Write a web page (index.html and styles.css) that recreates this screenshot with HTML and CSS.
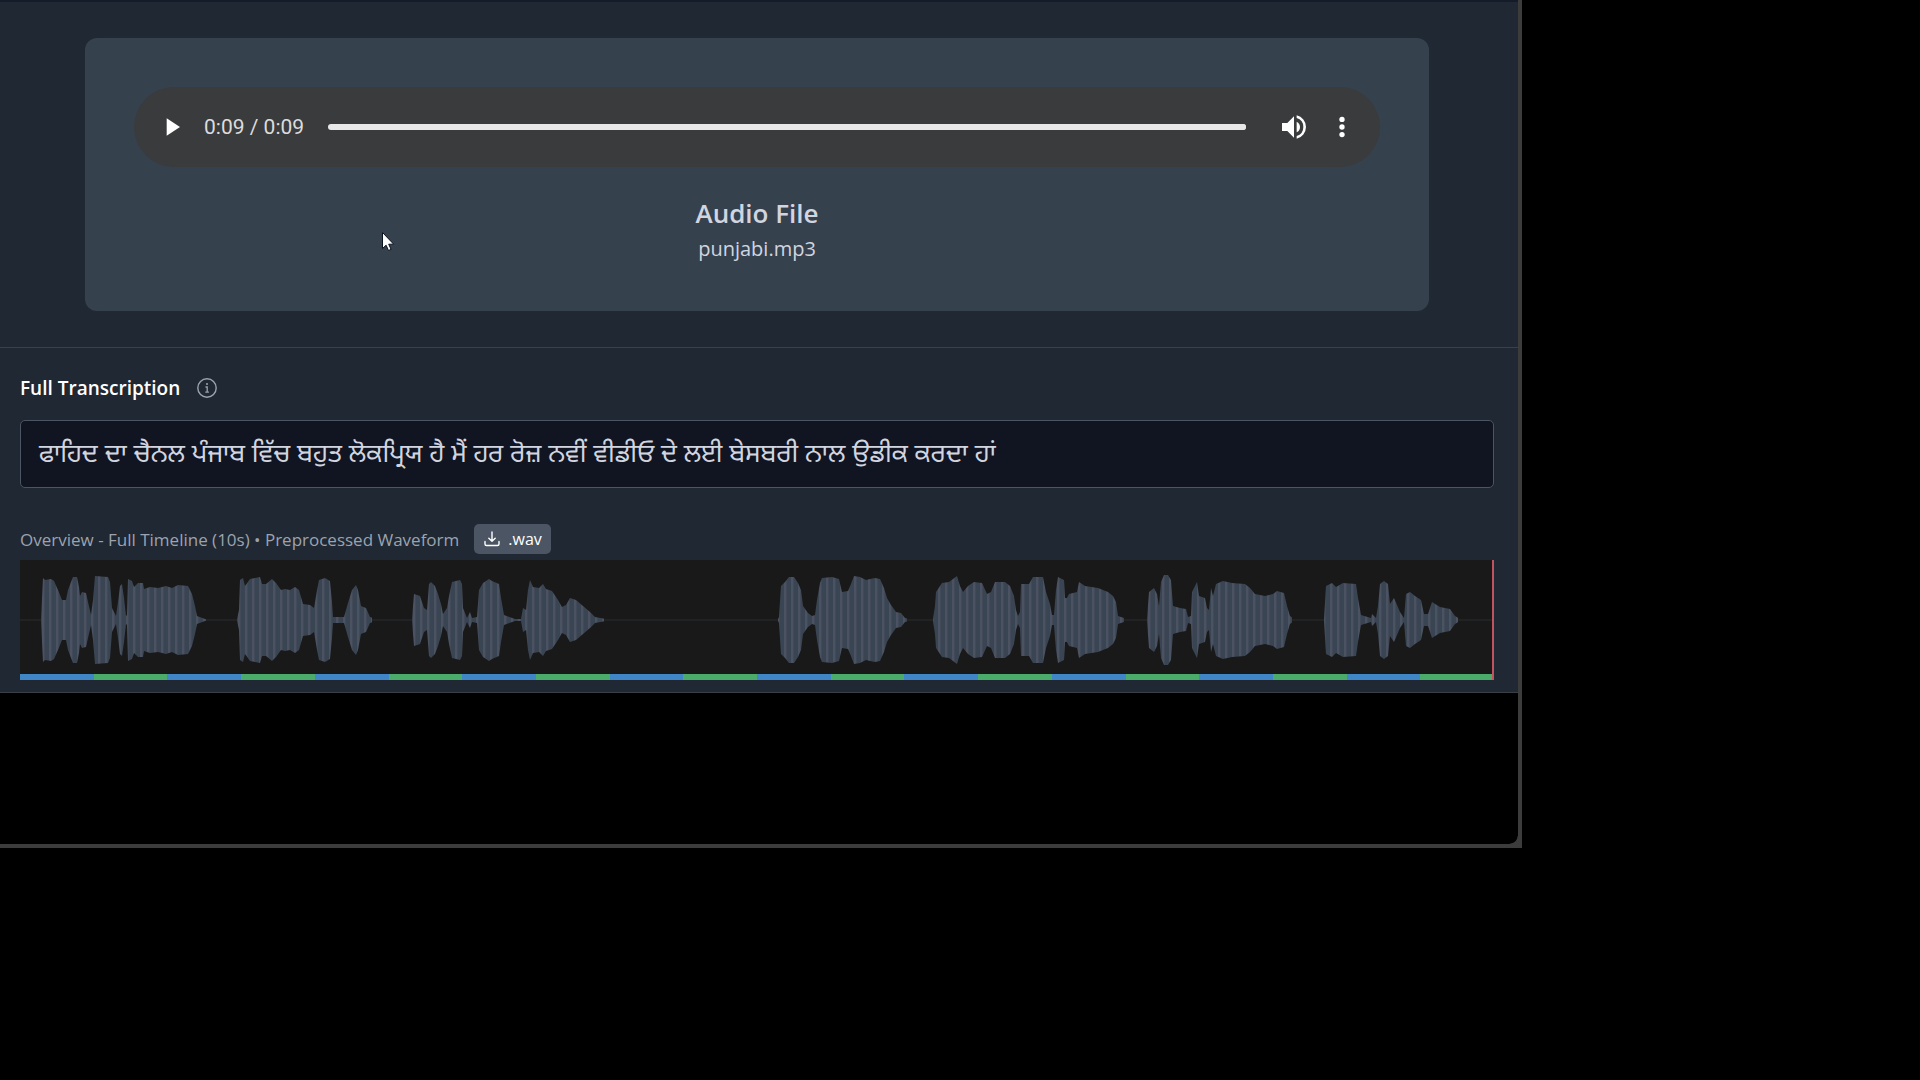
FILE: index.html
```html
<!DOCTYPE html>
<html lang="en">
<head>
<meta charset="utf-8">
<title>Audio transcription</title>
<link rel="stylesheet" href="styles.css">
</head>
<body>
<main class="window">
  <section class="media">
    <div class="card">
      <div class="player">
        <button class="icon-button" type="button" aria-label="Play">
          <svg width="32" height="32" viewBox="0 0 24 24" fill="currentColor"><path d="M8 5.500v13l10-6.500z"/></svg>
        </button>
        <span class="time">0:09 / 0:09</span>
        <input class="seek" type="range" min="0" max="9" value="9" aria-label="Seek">
        <button class="icon-button volume" type="button" aria-label="Mute">
          <svg width="32" height="32" viewBox="0 0 24 24" fill="currentColor"><path d="M3 9v6h4l5 5V4L7 9H3zm13.500 3A4.500 4.500 0 0 0 14 7.970v8.050A4.500 4.500 0 0 0 16.500 12zM14 3.230v2.060a7 7 0 0 1 0 13.420v2.060a9 9 0 0 0 0-17.540z"/></svg>
        </button>
        <button class="icon-button" type="button" aria-label="More options">
          <svg width="32" height="32" viewBox="0 0 24 24" fill="currentColor"><circle cx="12" cy="6.300" r="2"/><circle cx="12" cy="12" r="2"/><circle cx="12" cy="17.700" r="2"/></svg>
        </button>
      </div>
      <h1 class="card-title">Audio File</h1>
      <p class="card-file">punjabi.mp3</p>
    </div>
  </section>

  <section class="transcript">
    <div class="heading-row">
      <h2 class="heading">Full Transcription</h2>
      <svg class="info" width="22" height="22" viewBox="0 0 22 22" fill="none" stroke="currentColor"><circle cx="11" cy="11" r="9.200" stroke-width="1.400"/><path d="M9.500 10h1.700v5M9.300 15.200h3.600" stroke-width="1.300"/><circle cx="11" cy="7" r="1" fill="currentColor" stroke="none"/></svg>
    </div>
    <p class="text-box" lang="pa">ਫਾਹਿਦ ਦਾ ਚੈਨਲ ਪੰਜਾਬ ਵਿੱਚ ਬਹੁਤ ਲੋਕਪ੍ਰਿਯ ਹੈ ਮੈਂ ਹਰ ਰੋਜ਼ ਨਵੀਂ ਵੀਡੀਓ ਦੇ ਲਈ ਬੇਸਬਰੀ ਨਾਲ ਉਡੀਕ ਕਰਦਾ ਹਾਂ</p>

    <div class="overview-row">
      <span class="overview-label">Overview - Full Timeline (10s) • Preprocessed Waveform</span>
      <button class="download" type="button">
        <svg width="18" height="18" viewBox="0 0 18 18" fill="none" stroke="currentColor" stroke-width="1.400" stroke-linecap="round" stroke-linejoin="round"><path d="M9 2v9M5.800 8.200L9 11.300l3.200-3.100M2 11.500V14q0 1.500 1.500 1.500h11q1.500 0 1.500-1.500v-2.500"/></svg>
        .wav
      </button>
    </div>

    <div class="waveform">
      <svg class="wave" viewBox="20 -60 1474 114" preserveAspectRatio="none">
        <defs>
          <pattern id="stripes" width="7" height="114" patternUnits="userSpaceOnUse">
            <rect width="7" height="114" fill="#3a4554"/>
            <rect width="2" height="114" fill="#4b5261"/>
            <rect x="2" width="1" height="114" fill="#424a59"/>
          </pattern>
          <path id="envelope" d="M20 0V-1L31-1 35-3 37-3 41-2 42-22 43-42 45-40 51-41 54-39 58-30 62-20 66-20 68-30 71-38 73-43 77-43 79-33 80-24 82-28 86-27 88-18 91-5 93-20 95-44 108-43 110-38 112-12 116-4 118-18 120-34 122-36 124-22 126-4 127-5 128-41 132-39 134-33 138-37 143-37 144-31 150-33 158-32 166-34 172-32 178-35 188-34 192-26 195-14 197-4 205-1 237-1 239-10 240-40 243-42 245-34 250-41 260-43 262-36 266-36 272-41 276-37 281-30 285-31 290-30 295-33 299-30 303-16 310-15 314-12 317-30 319-40 325-42 330-39 332-18 333-3 344-3 348-17 352-30 356-35 358-30 361-14 366-12 370-3 376-1 412-1 413-14 414-26 420-24 424-12 427-10 429-36 431-38 435-34 438-26 441-16 443-6 447-12 449-24 452-38 460-40 462-36 463-12 467-2 470-8 472-2 477-3 479-30 483-37 489-41 492-39 499-36 501-22 504-5 515-1 521-1 523-12 526-10 528-30 530-40 533-33 539-32 543-36 546-31 552-29 558-20 562-13 566-15 570-22 576-20 583-14 590-8 595-3 606-1 778-1 779-3 781-34 785-38 789-43 794-43 798-37 801-30 803-14 808-7 812-4 815-5 817-20 820-37 822-42 832-43 839-41 842-28 848-29 851-36 854-44 860-43 866-40 870-41 875-42 880-41 884-32 887-22 891-15 896-8 901-7 905-2 910-1 933-1 935-14 936-28 942-37 949-38 957-44 960-34 963-28 968-34 974-38 982-37 987-26 991-28 995-38 1005-38 1010-34 1014-24 1016-10 1018-4 1020-8 1021-36 1029-36 1033-43 1043-43 1046-28 1050-16 1052-5 1054-5 1056-30 1058-43 1064-40 1065-22 1067-22 1069-26 1077-28 1079-38 1085-34 1098-32 1108-28 1113-24 1116-18 1118-4 1127-1 1147-1 1149-28 1154-32 1157-26 1159-14 1161-38 1164-45 1168-45 1171-40 1173-14 1180-12 1186-11 1188-3 1191-4 1192-28 1197-38 1199-24 1205-22 1207-12 1209-10 1211-32 1213-24 1216-36 1223-39 1232-37 1245-36 1250-32 1255-26 1265-24 1273-26 1277-29 1284-27 1287-14 1290-4 1294-1 1324-1 1326-34 1332-37 1336-33 1343-37 1356-36 1358-22 1361-5 1371-2 1372-6 1376-2 1378-14 1380-36 1384-39 1388-36 1390-16 1394-22 1400-8 1404-2 1406-26 1410-28 1415-24 1421-20 1424-6 1428-6 1432-18 1440-13 1450-11 1455-4 1460-1 1493-1V0z"/>
          <clipPath id="shape"><use href="#envelope"/><use href="#envelope" transform="scale(1 -1)"/></clipPath>
        </defs>
        <path d="M20 0H1494" stroke="#2a2c30" stroke-width="1"/>
        <g clip-path="url(#shape)">
          <path d="M41-60H206V54H41zM237-60H372V54H237zM412-60H604V54H412zM778-60H907V54H778zM933-60H1124V54H933zM1147-60H1292V54H1147zM1324-60H1458V54H1324z" fill="url(#stripes)"/>
        </g>
      </svg>
      <div class="segments">
        <i></i><i></i><i></i><i></i><i></i><i></i><i></i><i></i><i></i><i></i>
        <i></i><i></i><i></i><i></i><i></i><i></i><i></i><i></i><i></i><i></i>
      </div>
      <div class="playhead"></div>
    </div>
  </section>

  <svg class="cursor" width="13" height="20" viewBox="0 0 13 20"><path d="M.5.500v16l3.600-3.300 2.400 5.300 2.600-1.100-2.400-5.200h5z" fill="#fff" stroke="#0b1220"/></svg>
</main>
</body>
</html>
```
FILE: styles.css
```css
* { box-sizing: border-box; }

body {
  margin: 0;
  padding: 0 398px 0 0;
  background: #000;
  color: #d1d5e0;
  font-family: "Segoe UI", "Open Sans", "Noto Sans", "Noto Sans Gurmukhi", sans-serif;
}

h1, h2, p { margin: 0; }

button {
  border: 0;
  margin: 0;
  font-family: inherit;
  cursor: pointer;
}

.window {
  position: relative;
  min-height: calc(100vh - 232px);
  background: radial-gradient(circle at 0 0, #000 7px, #3c3c3c 8px) right bottom / 8px 8px no-repeat, #000;
  border-right: 4px solid #3c3c3c;
  border-bottom: 4px solid #3c3c3c;
}

.media {
  padding: 36px 89px 36px 85px;
  background: #1f2833;
  border-top: 2px solid #131c28;
  border-bottom: 1px solid #374151;
}

.card {
  height: 273px;
  padding: 49px;
  border-radius: 12px;
  background: #36414e;
  text-align: center;
}

.player {
  display: flex;
  align-items: center;
  height: 80px;
  padding: 0 22px;
  border-radius: 40px;
  background: #3a3b3c;
}

.icon-button {
  display: flex;
  align-items: center;
  justify-content: center;
  width: 32px;
  height: 32px;
  padding: 0;
  background: none;
  color: #fff;
}

.time {
  margin: 0 24px 0 16px;
  color: #dcdcdc;
  font: 21px/32px Roboto, sans-serif;
}

.seek {
  flex: 1;
  min-width: 0;
  height: 6px;
  margin: 0 32px 0 0;
  appearance: none;
  border-radius: 3px;
  background: #e8e8e8;
}

.seek::-webkit-slider-thumb {
  appearance: none;
  width: 6px;
  height: 6px;
  border-radius: 3px;
  background: #e8e8e8;
}

.volume { margin-right: 16px; }

.card-title {
  margin-top: 28px;
  font-size: 26px;
  line-height: 36px;
  font-weight: 600;
}

.card-file {
  font-size: 20px;
  line-height: 36px;
}

.transcript {
  padding: 24px 24px 12px 20px;
  background: #1f2833;
  border-bottom: 1px solid #3a3f46;
}

.heading-row {
  display: flex;
  align-items: center;
  gap: 16px;
  height: 32px;
  margin-bottom: 16px;
}

.heading {
  color: #fff;
  font-size: 19px;
  line-height: 32px;
  font-weight: 600;
}

.info { color: #9ca3af; }

.text-box {
  height: 68px;
  padding: 15px 18px;
  border: 1px solid #4b5563;
  border-radius: 5px;
  background: #111521;
  font-size: 26px;
  line-height: 32px;
  white-space: nowrap;
}

.overview-row {
  display: flex;
  align-items: center;
  gap: 15px;
  height: 30px;
  margin: 36px 0 6px;
}

.overview-label {
  color: #9ca3af;
  font-size: 17px;
}

.download {
  display: flex;
  align-items: center;
  gap: 7px;
  height: 30px;
  padding: 0 9px;
  border-radius: 5px;
  background: #4b5563;
  color: #fff;
  font-size: 16px;
}

.waveform {
  position: relative;
  background: #191919;
}

.wave {
  display: block;
  width: 100%;
  height: 114px;
}

.segments {
  display: flex;
  height: 6px;
}

.segments i {
  flex: 1;
  background: #4086c6;
}

.segments i:nth-child(even) { background: #4bab6a; }

.playhead {
  position: absolute;
  top: 0;
  right: 0;
  bottom: 0;
  width: 2px;
  background: #c05261;
}

.cursor {
  position: absolute;
  top: 232px;
  left: 382px;
}
```
